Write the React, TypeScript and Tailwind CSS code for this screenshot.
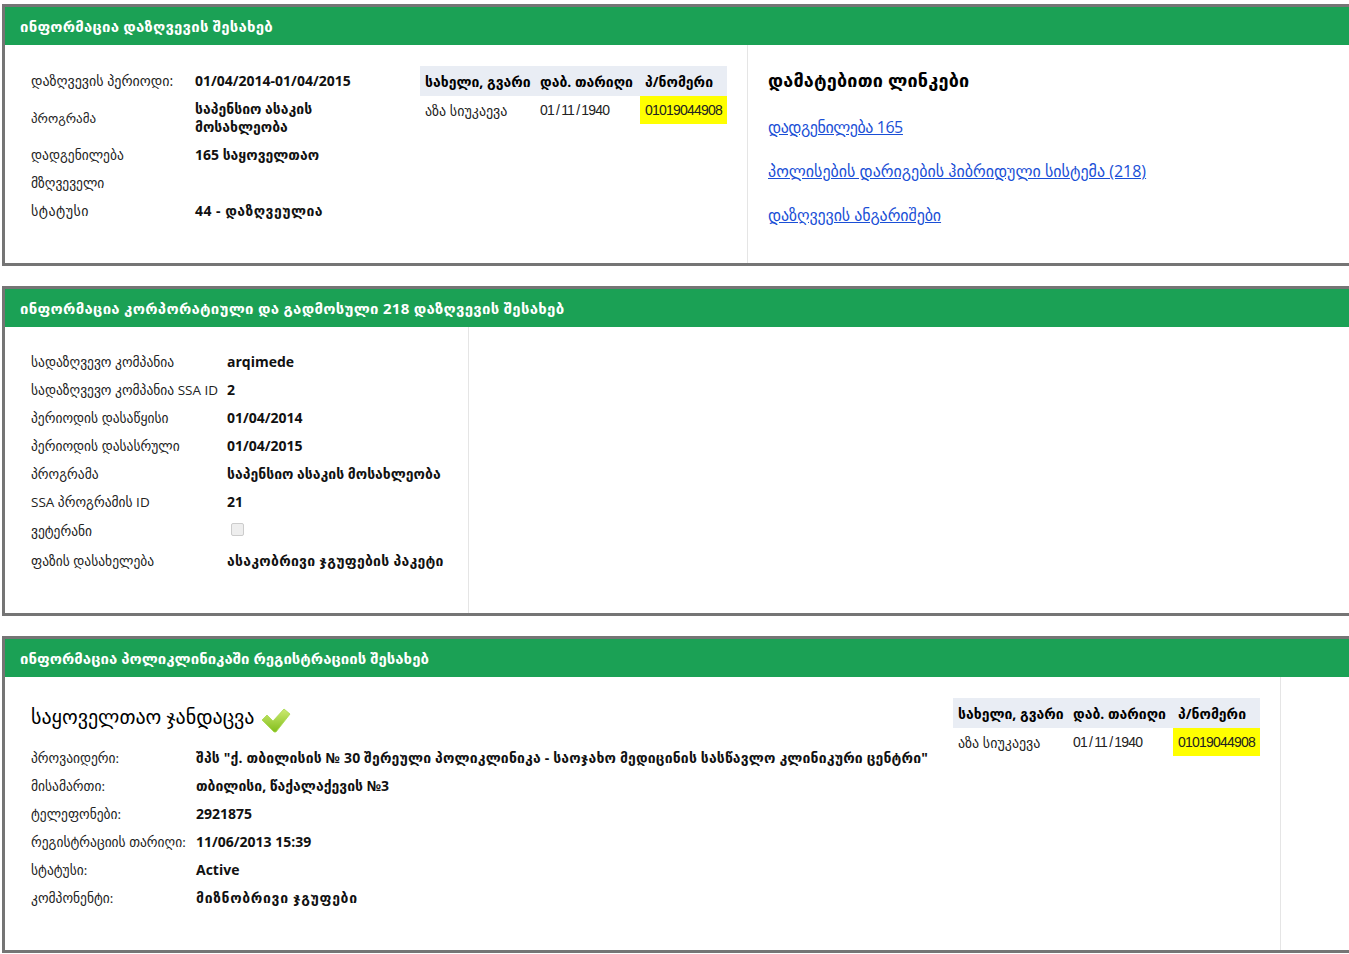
import React from "react";

const Head = ({ title, className = "" }: { title: string; className?: string }) => (
  <div className={`h-[38px] bg-[#1ba155] pl-[15px] pt-[1px] flex items-center text-[15px] font-bold text-white ${className}`}>
    {title}
  </div>
);

const Row = ({
  label,
  value,
  labelW,
  h = 28,
  labelClass = "text-[13.5px]",
  valueClass = "",
}: {
  label: string;
  value?: React.ReactNode;
  labelW: string;
  h?: number;
  labelClass?: string;
  valueClass?: string;
}) => (
  <div className="flex items-center" style={{ minHeight: h }}>
    <div className={`${labelW} shrink-0 leading-[18px] text-[#222] ${labelClass}`}>{label}</div>
    <div className={`text-[14px] font-bold text-[#111] leading-[18px] ${valueClass}`}>{value}</div>
  </div>
);

const People = () => (
  <div className="w-[307px] text-[14px]">
    <div className="flex h-[30px] items-center bg-[#e9edf4] font-bold text-black">
      <div className="w-[115px] pl-[5px]">სახელი, გვარი</div>
      <div className="w-[105px] pl-[5px]">დაბ. თარიღი</div>
      <div className="pl-[5px]">პ/ნომერი</div>
    </div>
    <div className="flex h-[28px] items-center text-[#222]">
      <div className="w-[115px] pl-[5px]">აზა სიუკაევა</div>
      <div className="w-[105px] pl-[5px] font-['Liberation_Sans'] tracking-[-0.78px]">
        01<span className="mx-[2px]">/</span>11<span className="mx-[2px]">/</span>1940
      </div>
      <div className="flex h-full w-[87px] items-center bg-[#ffff00] pl-[5px] font-['Liberation_Sans'] tracking-[-0.78px] text-[#222]">
        01019044908
      </div>
    </div>
  </div>
);

const Check = () => (
  <svg width="30" height="25" viewBox="0 0 30 25" className="ml-[6px] mt-[6px]">
    <defs>
      <linearGradient id="chk" x1="0" y1="0" x2="0" y2="1">
        <stop offset="0" stopColor="#cdea72" />
        <stop offset="1" stopColor="#82be1c" />
      </linearGradient>
    </defs>
    <path d="M1 12 L6 7 L12 13 L23 1 L29 6 L15 24 L13 24 Z" fill="url(#chk)" stroke="#a6d84a" strokeWidth="0.8" />
  </svg>
);

export default function App() {
  return (
    <div className="w-[1349px] h-[954px] overflow-hidden bg-white font-['Open_Sans','DejaVu_Sans',sans-serif] pt-[4px]">
      <div className="ml-[2px] w-[1400px] h-[262px] border-[3px] border-[#757575] mb-[20px]">
        <Head title="ინფორმაცია დაზღვევის შესახებ" className="tracking-[0.2px]" />
        <div className="flex h-[218px]">
          <div className="w-[743px] border-r border-[#e5e5e5] flex pl-[26px] pt-[21px]">
            <div className="w-[389px] mt-[1px]">
              <Row labelW="w-[164px]" labelClass="text-[14px]" label="დაზღვევის პერიოდი:" value="01/04/2014-01/04/2015" />
              <Row labelW="w-[164px]" labelClass="text-[13px]" h={46} label="პროგრამა" value={<>საპენსიო ასაკის<br />მოსახლეობა</>} />
              <Row labelW="w-[164px]" label="დადგენილება" value="165 საყოველთაო" />
              <Row labelW="w-[164px]" label="მზღვეველი" />
              <Row labelW="w-[164px]" labelClass="text-[14px] tracking-[0.5px]" label="სტატუსი" value="44 - დაზღვეულია" valueClass="tracking-[0.47px]" />
            </div>
            <People />
          </div>
          <div className="pl-[20px] pt-[24px]">
            <div className="text-[18px] leading-[22px] font-bold text-black tracking-[0.2px]">დამატებითი ლინკები</div>
            <div className="mt-[25px] flex flex-col gap-[22px] text-[16px] leading-[22px] text-[#1a4fd6] underline">
              <a href="#" className="tracking-[-0.45px]">დადგენილება 165</a>
              <a href="#">პოლისების დარიგების ჰიბრიდული სისტემა (218)</a>
              <a href="#" className="tracking-[-0.1px]">დაზღვევის ანგარიშები</a>
            </div>
          </div>
        </div>
      </div>

      <div className="ml-[2px] w-[1400px] h-[330px] border-[3px] border-[#757575] mb-[20px]">
        <Head title="ინფორმაცია კორპორატიული და გადმოსული 218 დაზღვევის შესახებ" className="tracking-[0.27px]" />
        <div className="h-[286px] w-[464px] border-r border-[#e5e5e5] pl-[26px] pt-[21px]">
          <Row labelW="w-[196px]" label="სადაზღვევო კომპანია" value="arqimede" />
          <Row labelW="w-[196px]" label="სადაზღვევო კომპანია SSA ID" value="2" />
          <Row labelW="w-[196px]" label="პერიოდის დასაწყისი" value="01/04/2014" />
          <Row labelW="w-[196px]" label="პერიოდის დასასრული" value="01/04/2015" />
          <Row labelW="w-[196px]" label="პროგრამა" value="საპენსიო ასაკის მოსახლეობა" />
          <Row labelW="w-[196px]" label="SSA პროგრამის ID" value="21" />
          <Row
            labelW="w-[196px]"
            h={30}
            label="ვეტერანი"
            value={<div className="mb-[4px] ml-[4px] h-[13px] w-[13px] rounded-[2px] border border-[#ccc] bg-[#eee]" />}
          />
          <Row labelW="w-[196px]" h={29} label="ფაზის დასახელება" value="ასაკობრივი ჯგუფების პაკეტი" valueClass="tracking-[0.27px]" />
        </div>
      </div>

      <div className="ml-[2px] w-[1400px] h-[317px] border-[3px] border-[#757575]">
        <Head title="ინფორმაცია პოლიკლინიკაში რეგისტრაციის შესახებ" />
        <div className="flex h-[273px]">
          <div className="w-[1276px] border-r border-[#e5e5e5] flex pl-[26px] pt-[21px]">
            <div className="w-[922px]">
              <div className="flex items-center h-[38px] text-[20px] text-black">
                საყოველთაო ჯანდაცვა
                <Check />
              </div>
              <div className="mt-[8px]">
                <Row labelW="w-[165px]" label="პროვაიდერი:" value={'შპს "ქ. თბილისის № 30 შერეული პოლიკლინიკა - საოჯახო მედიცინის სასწავლო კლინიკური ცენტრი"'} valueClass="tracking-[0.16px]" />
                <Row labelW="w-[165px]" label="მისამართი:" value="თბილისი, წაქალაქევის №3" />
                <Row labelW="w-[165px]" label="ტელეფონები:" value="2921875" />
                <Row labelW="w-[165px]" label="რეგისტრაციის თარიღი:" value="11/06/2013 15:39" />
                <Row labelW="w-[165px]" label="სტატუსი:" value="Active" />
                <Row labelW="w-[165px]" label="კომპონენტი:" value="მიზნობრივი ჯგუფები" valueClass="tracking-[0.67px]" />
              </div>
            </div>
            <People />
          </div>
        </div>
      </div>
    </div>
  );
}
